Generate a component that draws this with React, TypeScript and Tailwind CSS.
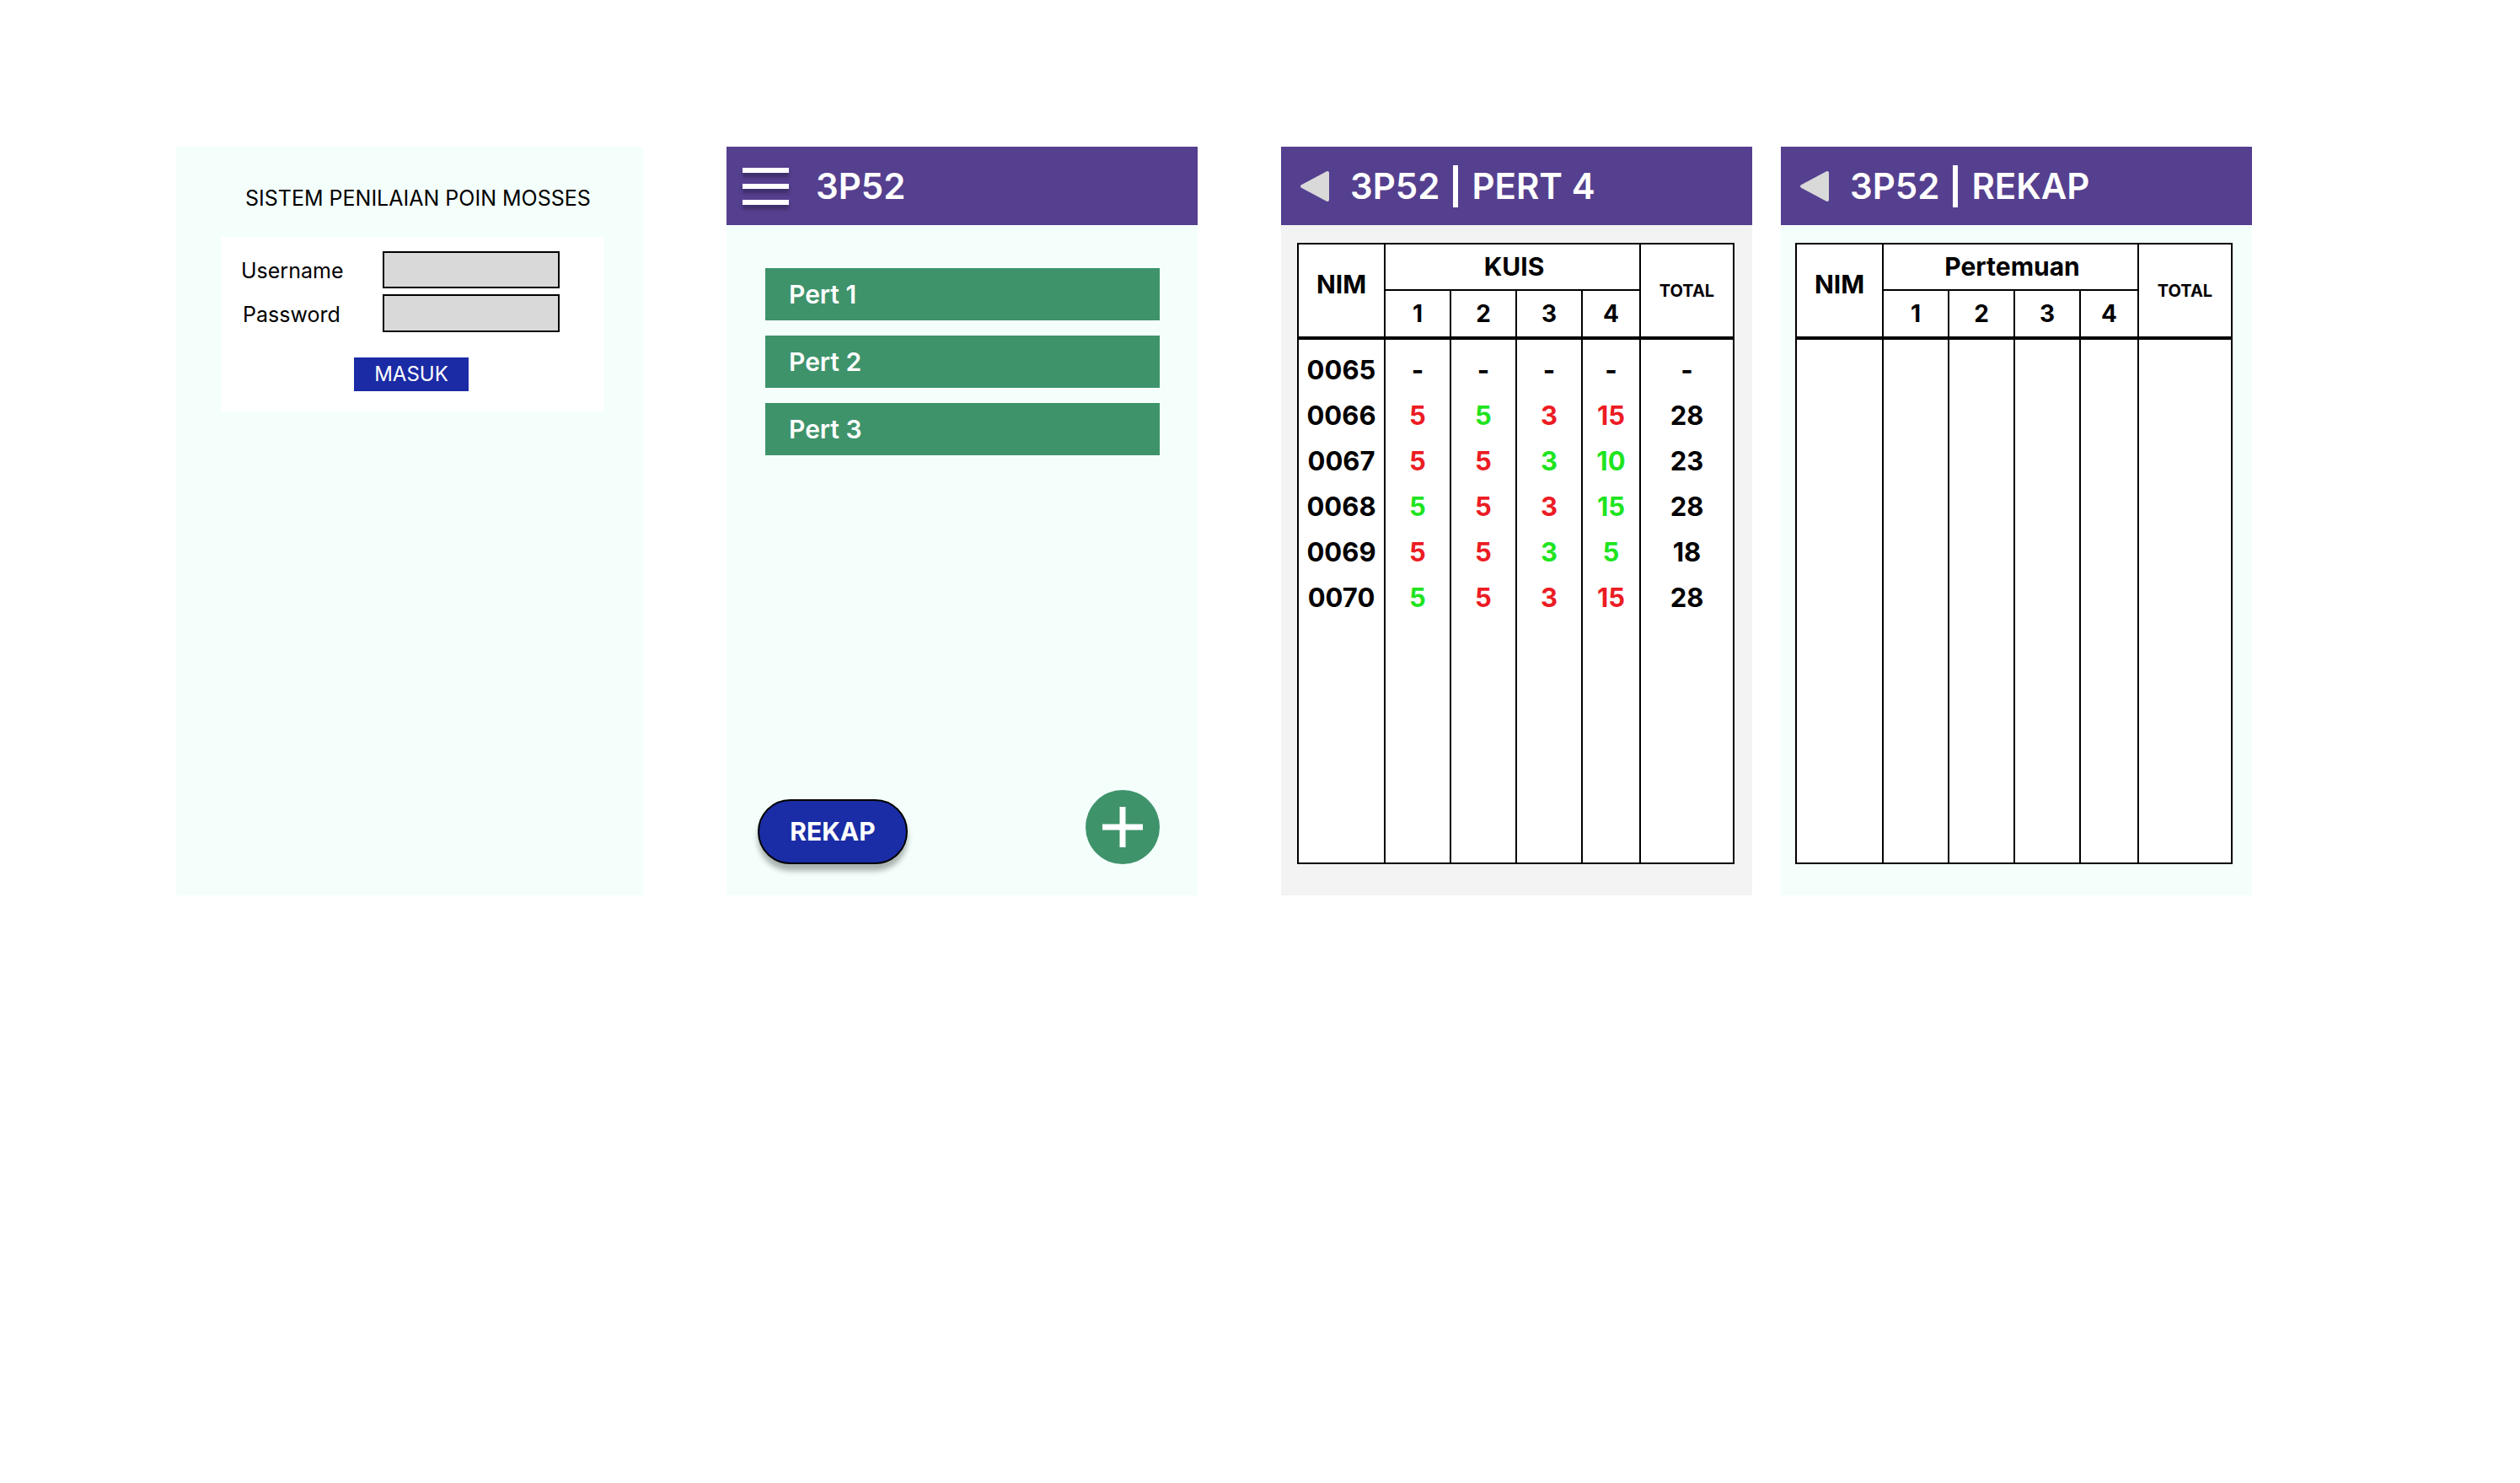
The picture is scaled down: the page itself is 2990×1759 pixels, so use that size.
import React from 'react';

type Tone = 'r' | 'g' | 'k';
type Cell = [string, Tone];

const toneClass: Record<Tone, string> = {
  r: 'text-[#ec1c24]',
  g: 'text-[#1fe41f]',
  k: 'text-black',
};

const nims = ['0065', '0066', '0067', '0068', '0069', '0070'];

// kolom kuis 1-4 lalu total
const scores: Cell[][] = [
  [['-', 'k'], ['-', 'k'], ['-', 'k'], ['-', 'k'], ['-', 'k']],
  [['5', 'r'], ['5', 'g'], ['3', 'r'], ['15', 'r'], ['28', 'k']],
  [['5', 'r'], ['5', 'r'], ['3', 'g'], ['10', 'g'], ['23', 'k']],
  [['5', 'g'], ['5', 'r'], ['3', 'r'], ['15', 'g'], ['28', 'k']],
  [['5', 'r'], ['5', 'r'], ['3', 'g'], ['5', 'g'], ['18', 'k']],
  [['5', 'g'], ['5', 'r'], ['3', 'r'], ['15', 'r'], ['28', 'k']],
];

const BackArrow: React.FC = () => (
  <svg width="36" height="38" viewBox="0 0 36 38" className="shrink-0">
    <polygon
      points="3,19 33,3 33,35"
      fill="#d9d9d9"
      stroke="#d9d9d9"
      strokeWidth="4"
      strokeLinejoin="round"
    />
  </svg>
);

const TitleBar: React.FC<{ page: string }> = ({ page }) => (
  <div className="flex h-[93px] shrink-0 items-center bg-[#553f8f] pl-[22px] text-white">
    <BackArrow />
    <span className="ml-[24px] text-[42px] font-semibold leading-none">3P52</span>
    <span className="mx-[16px] h-[50px] w-[6px] bg-white" />
    <span className="text-[42px] font-semibold leading-none">{page}</span>
  </div>
);

const ScoreTable: React.FC<{ group: string; filled?: boolean }> = ({ group, filled }) => {
  const columns: Cell[][] = [
    nims.map((n) => [n, 'k'] as Cell),
    ...[0, 1, 2, 3, 4].map((c) => scores.map((row) => row[c])),
  ];

  return (
    <div className="flex h-[737px] w-[519px] flex-col border-2 border-black bg-white text-black">
      <div className="grid grid-cols-[103px_78px_78px_78px_69px_1fr] grid-rows-[55px_54px] border-b-4 border-black">
        <div className="row-span-2 flex items-center justify-center border-r-2 border-black pb-[14px] text-[30px] font-bold">
          NIM
        </div>
        <div className="col-span-4 flex items-center justify-center border-r-2 border-b-2 border-black pl-[4px] text-[30px] font-bold">
          {group}
        </div>
        <div className="row-span-2 flex items-center justify-center text-[20px] font-bold">TOTAL</div>
        {['1', '2', '3', '4'].map((n) => (
          <div key={n} className="flex items-center justify-center border-r-2 border-black text-[28px] font-bold">
            {n}
          </div>
        ))}
      </div>
      <div className="grid flex-1 grid-cols-[103px_78px_78px_78px_69px_1fr]">
        {columns.map((col, i) => (
          <div
            key={i}
            className={i < 5 ? 'flex flex-col border-r-2 border-black pt-[9px]' : 'flex flex-col pt-[9px]'}
          >
            {filled &&
              col.map(([v, tone], j) => (
                <div
                  key={j}
                  className={`flex h-[54px] items-center justify-center text-[31px] font-bold ${toneClass[tone]}`}
                >
                  {v}
                </div>
              ))}
          </div>
        ))}
      </div>
    </div>
  );
};

const LoginPanel: React.FC = () => (
  <div className="flex h-[888px] w-[554px] shrink-0 flex-col bg-[#f4fffc] pt-[47px]">
    <p className="pl-[82px] text-[25px] leading-[29px] text-black">SISTEM PENILAIAN POIN MOSSES</p>
    <div className="ml-[54px] mt-[31px] flex w-[454px] flex-col bg-white pt-[17px] pb-[24px]">
      <div className="flex items-center">
        <span className="w-[191px] pl-[23px] pt-[4px] text-[25px] text-black">Username</span>
        <div className="h-[44px] w-[210px] border-2 border-black bg-[#d9d9d9]" />
      </div>
      <div className="mt-[7px] flex items-center">
        <span className="w-[191px] pl-[25px] pt-[4px] text-[25px] text-black">Password</span>
        <div className="h-[45px] w-[210px] border-2 border-black bg-[#d9d9d9]" />
      </div>
      <button className="ml-[157px] mt-[30px] flex h-[40px] w-[136px] items-center justify-center bg-[#1b2ba5] text-[24px] text-white">
        MASUK
      </button>
    </div>
  </div>
);

const ClassPanel: React.FC = () => (
  <div className="ml-[99px] flex h-[888px] w-[559px] shrink-0 flex-col bg-[#f4fffc]">
    <div className="flex h-[93px] shrink-0 items-center bg-[#553f8f] pl-[19px] text-white">
      <div className="flex flex-col gap-[13px]">
        <span className="h-[6px] w-[55px] bg-white shadow-[0_5px_4px_rgba(0,0,0,0.3)]" />
        <span className="h-[6px] w-[55px] bg-white shadow-[0_5px_4px_rgba(0,0,0,0.3)]" />
        <span className="h-[6px] w-[55px] bg-white shadow-[0_5px_4px_rgba(0,0,0,0.3)]" />
      </div>
      <span className="ml-[32px] text-[42px] font-semibold leading-none">3P52</span>
    </div>
    <div className="flex flex-col gap-[18px] pt-[51px] pl-[46px] pr-[45px]">
      {['Pert 1', 'Pert 2', 'Pert 3'].map((p) => (
        <div key={p} className="flex h-[62px] items-center bg-[#3e936b] pl-[28px] text-[30px] font-semibold text-white">
          {p}
        </div>
      ))}
    </div>
    <div className="mt-auto flex items-end justify-between pb-[37px] pl-[37px] pr-[45px]">
      <button className="flex h-[77px] w-[178px] items-center justify-center rounded-full border-2 border-black bg-[#1a2da6] text-[30px] font-bold text-white shadow-[0_8px_6px_rgba(0,0,0,0.3)]">
        REKAP
      </button>
      <div className="flex h-[88px] w-[88px] items-center justify-center rounded-full bg-[#3e936b]">
        <svg width="48" height="48" viewBox="0 0 48 48">
          <path d="M24 0V48M0 24H48" stroke="white" strokeWidth="7" />
        </svg>
      </div>
    </div>
  </div>
);

const App: React.FC = () => {
  return (
    <div className="flex h-[1759px] w-[2990px] items-start bg-white pt-[174px] pl-[209px] font-['Inter',sans-serif]">
      <LoginPanel />
      <ClassPanel />
      <div className="ml-[99px] flex h-[888px] w-[559px] shrink-0 flex-col bg-[#f3f3f3]">
        <TitleBar page="PERT 4" />
        <div className="pt-[21px] pl-[19px]">
          <ScoreTable group="KUIS" filled />
        </div>
      </div>
      <div className="ml-[34px] flex h-[888px] w-[559px] shrink-0 flex-col bg-[#f4fffc]">
        <TitleBar page="REKAP" />
        <div className="pt-[21px] pl-[17px]">
          <ScoreTable group="Pertemuan" />
        </div>
      </div>
    </div>
  );
};

export default App;
